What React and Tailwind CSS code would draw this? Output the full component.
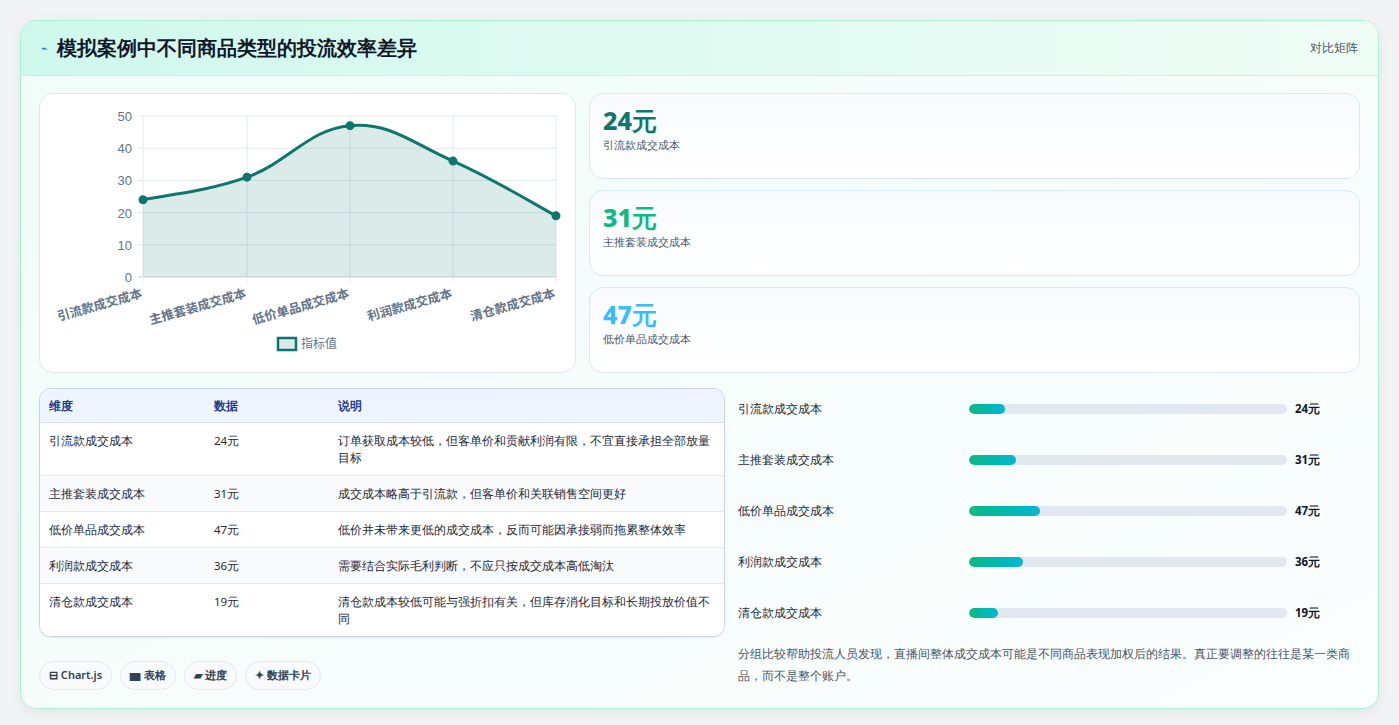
import React from "react";

const data = [
  { k: "引流款成交成本", v: 24, d: "订单获取成本较低，但客单价和贡献利润有限，不宜直接承担全部放量目标" },
  { k: "主推套装成交成本", v: 31, d: "成交成本略高于引流款，但客单价和关联销售空间更好" },
  { k: "低价单品成交成本", v: 47, d: "低价并未带来更低的成交成本，反而可能因承接弱而拖累整体效率" },
  { k: "利润款成交成本", v: 36, d: "需要结合实际毛利判断，不应只按成交成本高低淘汰" },
  { k: "清仓款成交成本", v: 19, d: "清仓款成本较低可能与强折扣有关，但库存消化目标和长期投放价值不同" },
];

function Chart() {
  const xs = [143, 247, 350, 453, 556];
  const y = (v) => 276 - v * 3.22;
  const pts = data.map((d, i) => [xs[i], y(d.v)]);
  let path = `M${pts[0][0]},${pts[0][1]}`;
  for (let i = 0; i < pts.length - 1; i++) {
    const p0 = pts[i - 1] || pts[i], p1 = pts[i], p2 = pts[i + 1], p3 = pts[i + 2] || p2;
    const t = 0.2;
    const c1 = [p1[0] + (p2[0] - p0[0]) * t, p1[1] + (p2[1] - p0[1]) * t];
    const c2 = [p2[0] - (p3[0] - p1[0]) * t, p2[1] - (p3[1] - p1[1]) * t];
    path += ` C${c1[0]},${c1[1]} ${c2[0]},${c2[1]} ${p2[0]},${p2[1]}`;
  }
  const ox = 40, oy = 93;
  return (
    <svg width="536" height="280" viewBox={`${ox} ${oy} 536 280`} className="block">
      {[0, 10, 20, 30, 40, 50].map((t) => (
        <g key={t}>
          <line x1="138" x2="556" y1={y(t)} y2={y(t)} stroke={t === 0 ? "#cbd5e1" : "#e2e8f0"} />
          <text x="132" y={y(t) + 5} textAnchor="end" fontSize="13" fill="#64748b" fontFamily="Liberation Sans, sans-serif">{t}</text>
        </g>
      ))}
      {xs.map((x) => (
        <line key={x} x1={x} x2={x} y1="115" y2="281" stroke="#e2e8f0" />
      ))}
      <path d={`${path} L556,276 L143,276 Z`} fill="#0f766e" fillOpacity="0.15" />
      <path d={path} fill="none" stroke="#0f766e" strokeWidth="3" />
      {pts.map((p, i) => (
        <circle key={i} cx={p[0]} cy={p[1]} r="3.5" fill="#0f766e" stroke="#0f766e" strokeWidth="2" />
      ))}
      {data.map((d, i) => (
        <text key={i} x={xs[i]} y="296" textAnchor="end" fontSize="12.5" fontWeight="600" fill="#64748b" transform={`rotate(-16 ${xs[i]} 296)`} fontFamily="Noto Sans CJK SC, sans-serif">{d.k}</text>
      ))}
      <rect x="278" y="337" width="18" height="12" fill="#dbeae8" stroke="#0f766e" strokeWidth="2.5" />
      <text x="301" y="347" fontSize="12" fill="#64748b" fontFamily="Noto Sans CJK SC, sans-serif">指标值</text>
    </svg>
  );
}

export default function App() {
  const kpis = [
    { v: "24元", l: "引流款成交成本", c: "text-[#0f766e]" },
    { v: "31元", l: "主推套装成交成本", c: "text-[#10b981]" },
    { v: "47元", l: "低价单品成交成本", c: "text-[#38bdf8]" },
  ];
  return (
    <div className="min-h-[725px] bg-[#f1f3f4] p-[20px] font-['Noto_Sans_CJK_SC',sans-serif]">
      <div className="rounded-[16px] border border-[#a7f3d0] bg-gradient-to-br from-[#f0fdf9] to-[#fbfdfe] overflow-hidden shadow-[0_4px_14px_rgba(0,0,0,0.06)]">
        <div className="h-[55px] flex items-center justify-between px-[20px] border-b border-[#d5ecef] bg-gradient-to-r from-[#cff8ec] to-[#f0fdf7]">
          <div className="flex items-center gap-[9px]">
            <span className="text-[11px] text-[#2563eb]">⌁</span>
            <span className="text-[20px] font-bold text-[#0f172a]">模拟案例中不同商品类型的投流效率差异</span>
          </div>
          <span className="text-[12px] text-[#475569]">对比矩阵</span>
        </div>
        <div className="p-[18px] pt-[17px] flex flex-col gap-[15px]">
          <div className="flex gap-[13px]">
            <div className="w-[537px] h-[280px] rounded-[14px] border border-[#dde7f0] bg-white">
              <Chart />
            </div>
            <div className="flex-1 flex flex-col gap-[11px]">
              {kpis.map((k) => (
                <div key={k.v} className="h-[86px] rounded-[14px] border border-[#d6e9f4] bg-gradient-to-b from-[#f8fafe] to-white px-[13px] pt-[9px]">
                  <div className={`text-[25px] font-extrabold leading-[34px] ${k.c}`}>{k.v}</div>
                  <div className="text-[11px] text-[#475569] mt-[0px]">{k.l}</div>
                </div>
              ))}
            </div>
          </div>
          <div className="flex gap-[13px]">
            <div className="w-[686px] flex flex-col">
              <div className="rounded-[12px] border border-[#cbd5e1] overflow-hidden bg-white shadow-[0_1px_2px_rgba(0,0,0,0.08)]">
                <table className="w-full text-[11.5px] text-[#1e293b] table-fixed">
                  <thead>
                    <tr className="bg-[#eef5fe] text-[#1e3a8a] h-[33px] border-b border-[#d6e3f0]">
                      <th className="text-left font-semibold pl-[9px] w-[174px]">维度</th>
                      <th className="text-left font-semibold w-[124px]">数据</th>
                      <th className="text-left font-semibold pr-[12px]">说明</th>
                    </tr>
                  </thead>
                  <tbody>
                    {data.map((d, i) => (
                      <tr key={d.k} className={`border-b last:border-b-0 border-[#e2e8f0] align-top ${i % 2 ? "bg-[#f8fafc]" : "bg-white"}`}>
                        <td className="pl-[9px] py-[9px] leading-[17px]">{d.k}</td>
                        <td className="py-[9px] leading-[17px]">{d.v}元</td>
                        <td className="py-[9px] pr-[12px] leading-[17px]">{d.d}</td>
                      </tr>
                    ))}
                  </tbody>
                </table>
              </div>
              <div className="flex gap-[8px] mt-[24px]">
                {["⊟ Chart.js", "▆ 表格", "▰ 进度", "✦ 数据卡片"].map((c) => (
                  <span key={c} className="h-[29px] px-[9px] rounded-full border border-[#e2e8f0] bg-[#f8fafc] text-[11px] font-semibold text-[#334155] flex items-center">{c}</span>
                ))}
              </div>
            </div>
            <div className="flex-1 flex flex-col">
              <div className="flex flex-col gap-[36px] pt-[13px]">
                {data.map((d) => (
                  <div key={d.k} className="flex items-center h-[15px]">
                    <span className="w-[231px] text-[11.5px] font-medium text-[#1e293b]">{d.k}</span>
                    <div className="w-[318px] h-[10px] rounded-full bg-[#e2e8f0] overflow-hidden">
                      <div className="h-full rounded-full bg-gradient-to-r from-[#10b981] to-[#06b6d4]" style={{ width: `${d.v * 1.5}px` }} />
                    </div>
                    <span className="ml-[8px] text-[11.5px] font-bold text-[#0f172a]">{d.v}元</span>
                  </div>
                ))}
              </div>
              <p className="mt-[23px] text-[12.3px] leading-[22px] text-[#475569] font-medium">分组比较帮助投流人员发现，直播间整体成交成本可能是不同商品表现加权后的结果。真正要调整的往往是某一类商品，而不是整个账户。</p>
            </div>
          </div>
        </div>
      </div>
    </div>
  );
}
